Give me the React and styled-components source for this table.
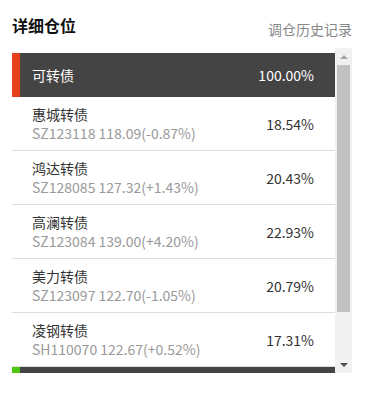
import React from 'react';
import styled, { createGlobalStyle } from 'styled-components';

const GlobalStyle = createGlobalStyle`
  body {
    margin: 0;
    background: #fff;
    font-family: 'Noto Sans CJK SC', 'Noto Sans', sans-serif;
  }
`;

const groups = [
  {
    name: '可转债',
    ratio: '100.00%',
    color: '#e63f1c',
    items: [
      { name: '惠城转债', code: 'SZ123118', price: '118.09', chg: '-0.87%', ratio: '18.54%' },
      { name: '鸿达转债', code: 'SZ128085', price: '127.32', chg: '+1.43%', ratio: '20.43%' },
      { name: '高澜转债', code: 'SZ123084', price: '139.00', chg: '+4.20%', ratio: '22.93%' },
      { name: '美力转债', code: 'SZ123097', price: '122.70', chg: '-1.05%', ratio: '20.79%' },
      { name: '凌钢转债', code: 'SH110070', price: '122.67', chg: '+0.52%', ratio: '17.31%' },
    ],
  },
  { name: '现金', ratio: '0.00%', color: '#4cc80e', items: [] },
];

const App = () => {
  return (
    <Page>
      <GlobalStyle />
      <TopBar>
        <Title>详细仓位</Title>
        <HistoryLink>调仓历史记录</HistoryLink>
      </TopBar>
      <Panel>
        <List>
          {groups.map((g) => (
            <div key={g.name}>
              <GroupHead $mark={g.color}>
                <span>{g.name}</span>
                <span>{g.ratio}</span>
              </GroupHead>
              {g.items.map((it) => (
                <Row key={it.code}>
                  <Info>
                    <Name>{it.name}</Name>
                    <Sub>
                      {it.code} {it.price}({it.chg})
                    </Sub>
                  </Info>
                  <Ratio>{it.ratio}</Ratio>
                </Row>
              ))}
            </div>
          ))}
        </List>
        <ScrollBar>
          <ArrowBtn>
            <Arrow $up $color="#a3a3a3" />
          </ArrowBtn>
          <Track>
            <Thumb />
          </Track>
          <ArrowBtn>
            <Arrow $color="#505050" />
          </ArrowBtn>
        </ScrollBar>
      </Panel>
    </Page>
  );
};
export default App;

const Page = styled.div`
  padding: 14px 19px 0 12px;
`;

const TopBar = styled.div`
  display: flex;
  justify-content: space-between;
  align-items: flex-start;
  margin-bottom: 9px;
`;

const Title = styled.h2`
  margin: 0;
  font-size: 16px;
  line-height: 22px;
  font-weight: bold;
  color: #111;
`;

const HistoryLink = styled.a`
  margin-top: 5px;
  font-size: 14px;
  line-height: 20px;
  color: #888;
  cursor: pointer;
`;

const Panel = styled.div`
  display: flex;
  height: 325px;
`;

const List = styled.div`
  flex: 1;
  overflow: hidden;
  padding-top: 5px;
`;

const GroupHead = styled.div`
  display: flex;
  justify-content: space-between;
  align-items: center;
  height: 44px;
  padding: 0 21px 0 12px;
  background: #444;
  border-left: 8px solid ${(p) => p.$mark};
  color: #fff;
  font-size: 14px;
`;

const Row = styled.div`
  display: flex;
  justify-content: space-between;
  align-items: center;
  padding: 8px 21px 7px 20px;
  border-bottom: 1px solid #ddd;
`;

const Info = styled.div`
  display: flex;
  flex-direction: column;
`;

const Name = styled.div`
  font-size: 14px;
  line-height: 19px;
  color: #333;
`;

const Sub = styled.div`
  font-size: 14px;
  line-height: 19px;
  color: #999;
`;

const Ratio = styled.div`
  font-size: 14px;
  color: #333;
`;

const ScrollBar = styled.div`
  width: 17px;
  display: flex;
  flex-direction: column;
  background: #f1f1f1;
`;

const ArrowBtn = styled.div`
  height: 17px;
  display: flex;
  align-items: center;
  justify-content: center;
`;

const Arrow = styled.div`
  width: 0;
  height: 0;
  border-left: 4px solid transparent;
  border-right: 4px solid transparent;
  ${(p) => (p.$up ? `border-bottom: 4px solid ${p.$color};` : `border-top: 4px solid ${p.$color};`)}
`;

const Track = styled.div`
  flex: 1;
  padding: 0 2px;
`;

const Thumb = styled.div`
  height: 247px;
  background: #c1c1c1;
`;
